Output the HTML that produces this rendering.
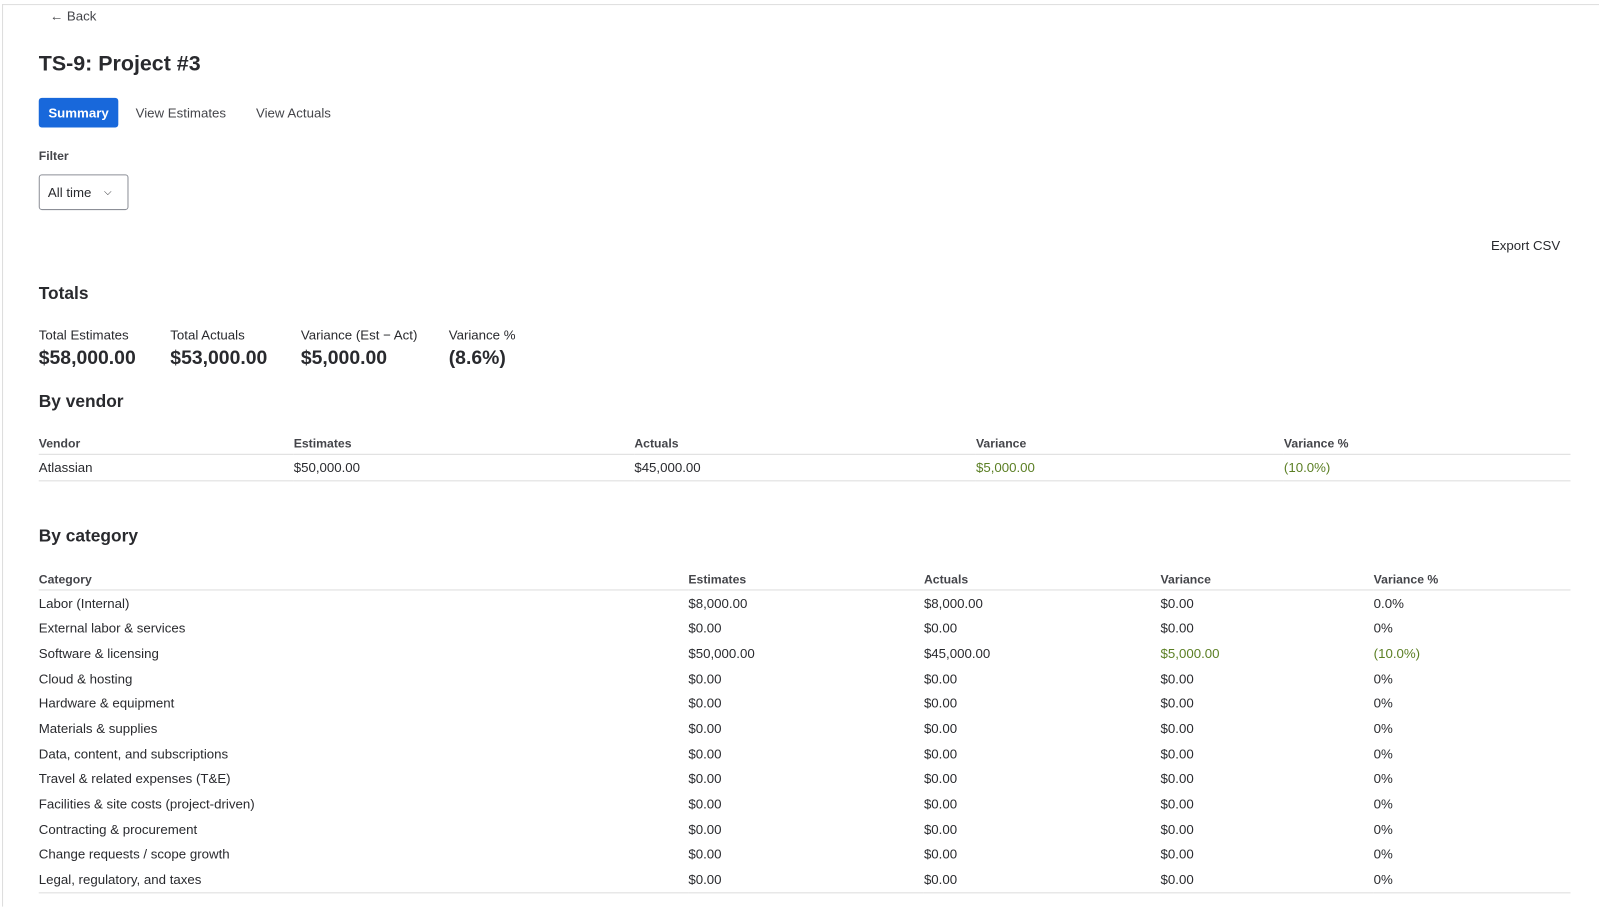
<!DOCTYPE html>
<html style="overflow:hidden;height:907px"><head><style>
body{margin:0;width:1599px;height:907px;background:#fff;font-family:"Liberation Sans",sans-serif;color:#292a2e;position:relative;overflow:hidden}
#w{position:absolute;left:0;top:0;width:1568px;height:889px;transform:scale(1.0198);transform-origin:0 0}
.frame{position:absolute;left:2px;top:4px;right:0;bottom:0;border-left:1px solid #ddd;border-top:1px solid #ddd}
.a{position:absolute;white-space:nowrap}
.s13{font-size:13px}
.g{color:#5b7f24}
table{position:absolute;left:38px;width:1502px;border-collapse:collapse;font-size:13px}
th{text-align:left;font-weight:bold;color:#44454a;font-size:12px;height:22px;padding:0;border-bottom:1px solid #ddd;vertical-align:bottom;padding-bottom:3px}
td{padding:0;height:24.65px;vertical-align:middle}
</style></head><body><div id="w">
<div class="frame"></div>
<div class="a s13" style="left:49px;top:8px;color:#44454a">← Back</div>
<div class="a" style="left:38px;top:51px;font-size:21px;font-weight:bold">TS-9: Project #3</div>
<div class="a s13" style="left:38px;top:96px;width:78px;height:29px;background:#1868db;border-radius:3px;color:#fff;font-weight:bold;text-align:center;line-height:29px">Summary</div>
<div class="a s13" style="left:133px;top:103px;color:#44454a">View Estimates</div>
<div class="a s13" style="left:251px;top:103px;color:#44454a">View Actuals</div>
<div class="a" style="left:38px;top:146px;font-size:12px;font-weight:bold;color:#44454a">Filter</div>
<div class="a s13" style="left:38px;top:171px;height:33px;border:1px solid #8c8f97;border-radius:3px;line-height:33px;padding-left:8px;width:78px">All time <span style="position:absolute;left:63px;top:0;font-size:10px">⌵</span></div>
<div class="a s13" style="left:1462px;top:233px">Export CSV</div>
<div class="a" style="left:38px;top:278px;font-size:17px;font-weight:bold">Totals</div>
<div class="a s13" style="left:38px;top:321px">Total Estimates</div>
<div class="a s13" style="left:167px;top:321px">Total Actuals</div>
<div class="a s13" style="left:295px;top:321px">Variance (Est − Act)</div>
<div class="a s13" style="left:440px;top:321px">Variance %</div>
<div class="a" style="left:38px;top:341px;font-size:19px;font-weight:bold">$58,000.00</div>
<div class="a" style="left:167px;top:341px;font-size:19px;font-weight:bold">$53,000.00</div>
<div class="a" style="left:295px;top:341px;font-size:19px;font-weight:bold">$5,000.00</div>
<div class="a" style="left:440px;top:341px;font-size:19px;font-weight:bold">(8.6%)</div>
<div class="a" style="left:38px;top:384px;font-size:17px;font-weight:bold">By vendor</div>
<table style="top:420px">
<tr><th style="width:250px">Vendor</th><th style="width:334px">Estimates</th><th style="width:335px">Actuals</th><th style="width:302px">Variance</th><th>Variance %</th></tr>
<tr style="border-bottom:1px solid #ddd"><td>Atlassian</td><td>$50,000.00</td><td>$45,000.00</td><td class="g">$5,000.00</td><td class="g">(10.0%)</td></tr>
</table>
<div class="a" style="left:38px;top:516px;font-size:17px;font-weight:bold">By category</div>
<table style="top:553px">
<tr><th style="width:637px">Category</th><th style="width:231px">Estimates</th><th style="width:232px">Actuals</th><th style="width:209px">Variance</th><th>Variance %</th></tr>
<tr><td>Labor (Internal)</td><td>$8,000.00</td><td>$8,000.00</td><td>$0.00</td><td>0.0%</td></tr>
<tr><td>External labor &amp; services</td><td>$0.00</td><td>$0.00</td><td>$0.00</td><td>0%</td></tr>
<tr><td>Software &amp; licensing</td><td>$50,000.00</td><td>$45,000.00</td><td class="g">$5,000.00</td><td class="g">(10.0%)</td></tr>
<tr><td>Cloud &amp; hosting</td><td>$0.00</td><td>$0.00</td><td>$0.00</td><td>0%</td></tr>
<tr><td>Hardware &amp; equipment</td><td>$0.00</td><td>$0.00</td><td>$0.00</td><td>0%</td></tr>
<tr><td>Materials &amp; supplies</td><td>$0.00</td><td>$0.00</td><td>$0.00</td><td>0%</td></tr>
<tr><td>Data, content, and subscriptions</td><td>$0.00</td><td>$0.00</td><td>$0.00</td><td>0%</td></tr>
<tr><td>Travel &amp; related expenses (T&amp;E)</td><td>$0.00</td><td>$0.00</td><td>$0.00</td><td>0%</td></tr>
<tr><td>Facilities &amp; site costs (project-driven)</td><td>$0.00</td><td>$0.00</td><td>$0.00</td><td>0%</td></tr>
<tr><td>Contracting &amp; procurement</td><td>$0.00</td><td>$0.00</td><td>$0.00</td><td>0%</td></tr>
<tr><td>Change requests / scope growth</td><td>$0.00</td><td>$0.00</td><td>$0.00</td><td>0%</td></tr>
<tr style="border-bottom:1px solid #ddd"><td>Legal, regulatory, and taxes</td><td>$0.00</td><td>$0.00</td><td>$0.00</td><td>0%</td></tr>
</table>
</div></body></html>
